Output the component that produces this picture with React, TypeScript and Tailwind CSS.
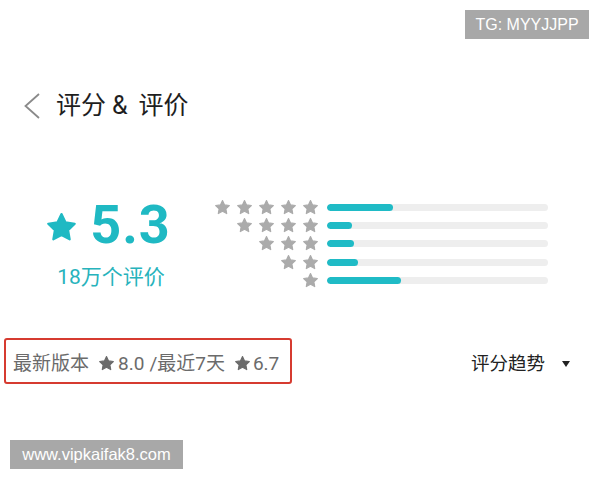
import React from "react";

const STAR = "M12 2.2l2.95 6.1 6.7.95-4.85 4.7 1.15 6.65L12 17.45l-5.95 3.15 1.15-6.65-4.85-4.7 6.7-.95z";

function Star({ className, color }: { className: string; color: string }) {
  return (
    <svg viewBox="0 0 24 24" className={className}>
      <path d={STAR} fill={color} stroke={color} strokeWidth={1.6} strokeLinejoin="round" />
    </svg>
  );
}

const rows = [
  { stars: 5, fill: 66 },
  { stars: 4, fill: 25 },
  { stars: 3, fill: 27 },
  { stars: 2, fill: 31 },
  { stars: 1, fill: 74 },
];

export default function App() {
  return (
    <div
      className="w-[600px] h-[480px] bg-white overflow-hidden flex flex-col"
      style={{ fontFamily: "Roboto, 'Noto Sans CJK SC', sans-serif" }}
    >
      {/* top watermark */}
      <div className="flex justify-end pt-[10px] pr-[11px]">
        <div className="h-[29px] w-[124px] bg-[#a8a8a8] text-white text-[16px] leading-[29px] text-center font-['Liberation_Sans',sans-serif]">
          TG: MYYJJPP
        </div>
      </div>

      {/* header */}
      <div className="flex items-center mt-[54px] h-[26px] pl-[24px]">
        <svg viewBox="0 0 16 26" className="w-[16px] h-[26px]">
          <path d="M15 1L1.5 13L15 25" fill="none" stroke="#8a8a8a" strokeWidth={1.8} />
        </svg>
        <div className="ml-[16px] flex items-center text-[25px] leading-[26px] text-[#1e1e1e] whitespace-nowrap">
          <span>评分</span>
          <span className="ml-[6px]">&amp;</span>
          <span className="ml-[11px]">评价</span>
        </div>
      </div>

      {/* rating section */}
      <div className="flex mt-[79px]">
        <div className="flex flex-col items-center pl-[45px] w-[171px]">
          <div className="flex items-center h-[54px]">
            <Star className="w-[33px] h-[33px] mt-[4px]" color="#1fb9c3" />
            <div className="ml-[12px] text-[54px] leading-none font-bold tracking-[1px] text-[#1fb9c3]">5.3</div>
          </div>
          <div className="mt-[15px] text-[21px] leading-[21px] text-[#27b3bc] ml-[6px]">18万个评价</div>
        </div>

        <div className="flex flex-col ml-[40px]">
          {rows.map((r, i) => (
            <div key={i} className="flex items-center h-[18.4px]">
              <div className="flex justify-end w-[110px]">
                {Array.from({ length: r.stars }).map((_, j) => (
                  <div key={j} className="w-[22px] flex justify-center">
                    <Star className="w-[17px] h-[17px]" color="#ababab" />
                  </div>
                ))}
              </div>
              <div className="ml-[6px] w-[221px] h-[7px] rounded-full bg-[#eeeeee] overflow-hidden">
                <div className="h-full rounded-full bg-[#1fbbc6]" style={{ width: `${r.fill}px` }} />
              </div>
            </div>
          ))}
        </div>
      </div>

      {/* bottom row */}
      <div className="flex items-center justify-between mt-[48px]">
        <div className="ml-[4px] w-[288px] h-[46px] border-2 border-[#d63b30] rounded-[3px] flex items-center pl-[7px] pt-[6px] text-[19px] leading-[20px] text-[#6b6b6b] whitespace-nowrap">
          <span>最新版本</span>
          <Star className="w-[17px] h-[17px] ml-[9px] mr-[3px]" color="#6b6b6b" />
          <span>8.0</span>
          <span className="ml-[5px]">/最近7天</span>
          <Star className="w-[17px] h-[17px] ml-[9px] mr-[2px]" color="#6b6b6b" />
          <span>6.7</span>
        </div>
        <div className="flex items-center mr-[30px] pt-[6px]">
          <span className="text-[18.5px] leading-[20px] text-[#222222]">评分趋势</span>
          <svg viewBox="0 0 8 6" className="w-[8px] h-[6px] ml-[17px]">
            <path d="M0 0H8L4 6z" fill="#222222" />
          </svg>
        </div>
      </div>

      {/* bottom watermark */}
      <div className="mt-[56px] ml-[10px]">
        <div className="h-[29px] w-[173px] bg-[#a8a8a8] text-white text-[16.5px] leading-[29px] text-center font-['Liberation_Sans',sans-serif]">
          www.vipkaifak8.com
        </div>
      </div>
    </div>
  );
}
